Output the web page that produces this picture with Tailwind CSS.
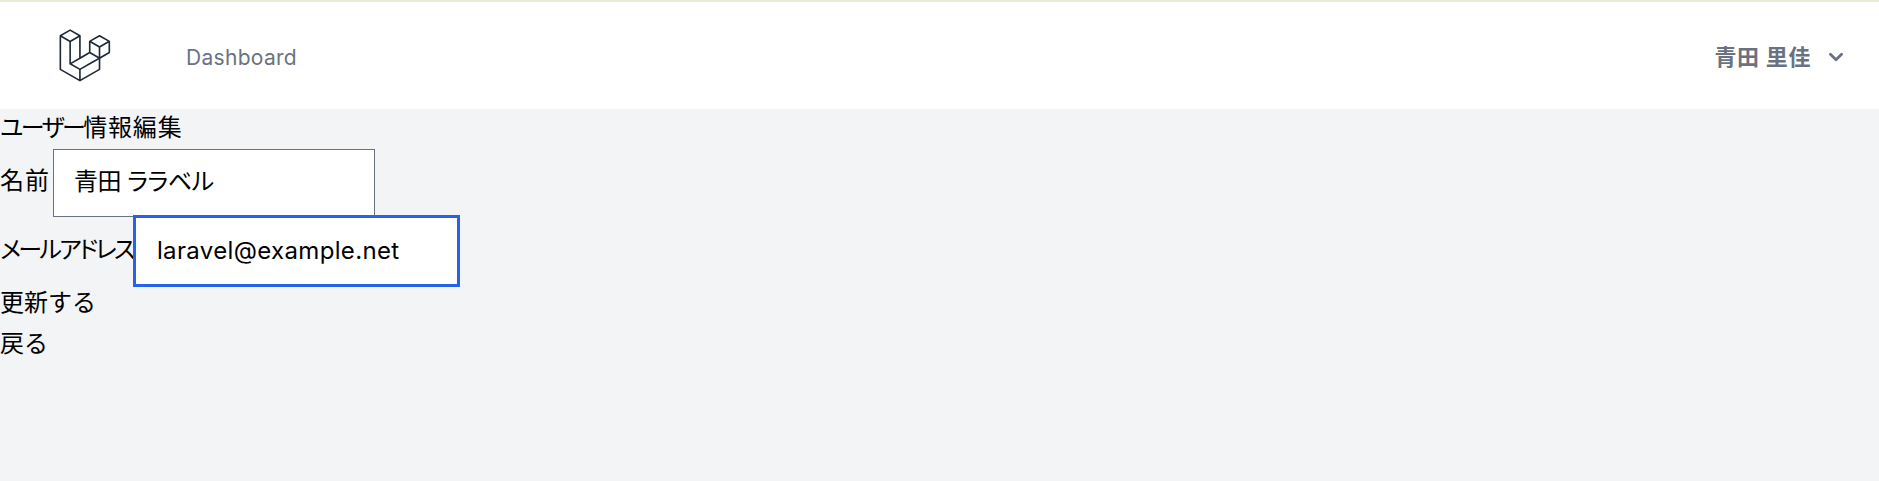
<!DOCTYPE html>
<html lang="ja">
  <head>
    <meta charset="UTF-8" />
    <meta name="viewport" content="width=device-width, initial-scale=1.0" />
    <title>ユーザー情報編集</title>
    <script src="https://cdn.jsdelivr.net/npm/@tailwindcss/browser@4"></script>
  </head>
  <body class="bg-gray-100 min-h-screen text-black text-[24px] leading-[36px] font-['Inter','Noto_Sans_CJK_JP',sans-serif]">
    <nav class="bg-white h-[109px] border-t-2 border-[#e9ebd9] flex items-center justify-between pl-[53px] pr-[29px]">
      <div class="flex items-center">
        <svg viewBox="0 0 316 316" class="w-[59px] h-[59px] fill-[#1f2937]" xmlns="http://www.w3.org/2000/svg">
          <path d="M305.8 81.125C305.77 80.995 305.69 80.885 305.65 80.755C305.56 80.525 305.49 80.285 305.37 80.075C305.29 79.935 305.17 79.815 305.07 79.685C304.94 79.515 304.83 79.325 304.68 79.175C304.55 79.045 304.39 78.955 304.25 78.845C304.09 78.715 303.95 78.575 303.77 78.475L251.32 48.275C249.97 47.495 248.31 47.495 246.96 48.275L194.51 78.475C194.33 78.575 194.19 78.725 194.03 78.845C193.89 78.955 193.73 79.045 193.6 79.175C193.45 79.325 193.34 79.515 193.21 79.685C193.11 79.815 192.99 79.935 192.91 80.075C192.79 80.295 192.71 80.535 192.63 80.755C192.58 80.875 192.51 80.995 192.48 81.125C192.38 81.495 192.33 81.875 192.33 82.265V139.625L148.62 164.795V52.575C148.62 52.185 148.57 51.805 148.47 51.435C148.44 51.305 148.36 51.195 148.32 51.065C148.23 50.835 148.16 50.595 148.04 50.385C147.96 50.245 147.84 50.125 147.74 49.995C147.61 49.825 147.5 49.635 147.35 49.485C147.22 49.355 147.06 49.265 146.92 49.155C146.76 49.025 146.62 48.885 146.44 48.785L93.99 18.585C92.64 17.805 90.98 17.805 89.63 18.585L37.18 48.785C37 48.885 36.86 49.035 36.7 49.155C36.56 49.265 36.4 49.355 36.27 49.485C36.12 49.635 36.01 49.825 35.88 49.995C35.78 50.125 35.66 50.245 35.58 50.385C35.46 50.605 35.38 50.845 35.3 51.065C35.25 51.185 35.18 51.305 35.15 51.435C35.05 51.805 35 52.185 35 52.575V232.235C35 233.795 35.84 235.245 37.19 236.025L142.1 296.425C142.33 296.555 142.58 296.635 142.83 296.725C142.95 296.765 143.06 296.835 143.18 296.865C143.55 296.965 143.93 297.015 144.31 297.015C144.69 297.015 145.07 296.965 145.44 296.865C145.56 296.835 145.67 296.765 145.79 296.725C146.04 296.635 146.3 296.555 146.52 296.425L251.43 236.025C252.78 235.245 253.62 233.805 253.62 232.235V174.875L303.76 146.015C305.12 145.235 305.95 143.795 305.95 142.225V82.265C305.95 81.875 305.89 81.495 305.8 81.125ZM144.2 227.205L100.57 202.515L146.39 176.135L196.66 147.195L240.33 172.335L208.29 190.625L144.2 227.205ZM244.75 114.995V164.795L226.39 154.225L201.03 139.625V89.825L219.39 100.395L244.75 114.995ZM249.12 57.105L292.81 82.265L249.12 107.425L205.43 82.265L249.12 57.105ZM114.49 184.425L96.13 194.995V85.305L121.49 70.705L139.85 60.135V169.815L114.49 184.425ZM91.76 27.425L135.45 52.585L91.76 77.745L48.07 52.585L91.76 27.425ZM43.67 60.135L62.03 70.705L87.39 85.305V202.545V202.555V202.565C87.39 202.735 87.44 202.895 87.46 203.055C87.49 203.265 87.49 203.485 87.55 203.695V203.705C87.6 203.875 87.69 204.035 87.76 204.195C87.84 204.375 87.89 204.575 87.99 204.745C87.99 204.745 87.99 204.755 88 204.755C88.09 204.905 88.22 205.035 88.33 205.175C88.45 205.335 88.55 205.495 88.69 205.635L88.7 205.645C88.82 205.765 88.98 205.855 89.12 205.965C89.28 206.085 89.42 206.225 89.59 206.325C89.6 206.325 89.6 206.325 89.61 206.335C89.62 206.335 89.62 206.345 89.63 206.345L139.87 234.775V285.065L43.67 229.705V60.135ZM244.75 229.705L148.58 285.075V234.775L219.8 194.115L244.75 179.875V229.705ZM297.2 139.625L253.49 164.795V114.995L278.85 100.395L297.21 89.825V139.625H297.2Z" />
        </svg>
        <a href="#" class="ml-[74px] mt-[4px] text-[21px] tracking-[0.3px] text-gray-500">Dashboard</a>
      </div>
      <button class="flex items-center mt-[3px] text-[22px] tracking-[0.6px] font-semibold text-gray-500">
        <span>青田 里佳</span>
        <svg viewBox="0 0 20 20" class="ml-[11px] w-[28px] h-[28px] fill-current" xmlns="http://www.w3.org/2000/svg">
          <path fill-rule="evenodd" clip-rule="evenodd" d="M5.293 7.293a1 1 0 011.414 0L10 10.586l3.293-3.293a1 1 0 111.414 1.414l-4 4a1 1 0 01-1.414 0l-4-4a1 1 0 010-1.414z" />
        </svg>
      </button>
    </nav>

    <main class="pt-px">
      <div><span class="tracking-[-2.5px] [font-feature-settings:'palt']">ユーザー</span><span class="tracking-[0.8px]">情報編集</span></div>
      <form class="pt-[3px]">
        <div class="flex items-center gap-[3px]">
          <label for="name" class="mb-[4px] tracking-[1px]">名前</label>
          <input id="name" type="text" value="青田 ララベル" class="w-[322px] h-[68px] px-[20px] pb-[7px] bg-white border border-gray-500 text-[24px] tracking-[-0.5px] [font-feature-settings:'palt']" />
        </div>
        <div class="flex items-center mt-px">
          <label for="email" class="mb-[3px] tracking-[-2.6px] [font-feature-settings:'palt']">メールアドレス</label>
          <input id="email" type="email" value="laravel@example.net" class="ml-[3px] w-[321px] h-[66px] px-[21px] pb-[2px] bg-white ring-[3px] ring-[#2563eb] text-[24px] tracking-[0.35px]" />
        </div>
        <button type="button" class="block mt-px">更新する</button>
      </form>
      <a href="#" class="block mt-[5px]">戻る</a>
    </main>
  </body>
</html>
